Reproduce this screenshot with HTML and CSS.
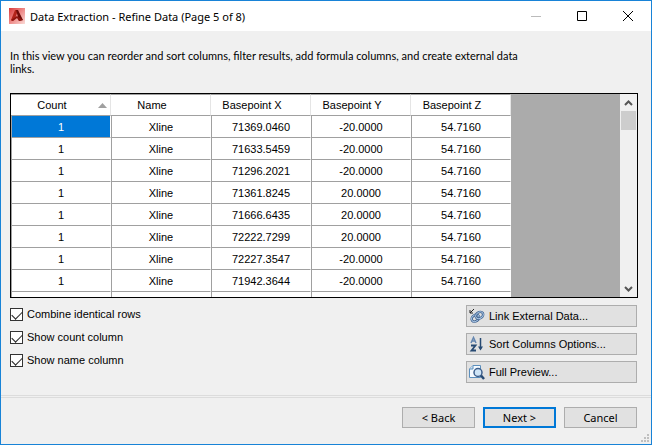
FILE: index.html
```html
<!DOCTYPE html>
<html lang="en">
<head>
  <meta charset="UTF-8">
  <meta name="viewport" content="width=device-width, initial-scale=1.0">
  <title>Data Extraction - Refine Data (Page 5 of 8)</title>
  <link rel="stylesheet" href="styles.css">
</head>
<body>
  <div class="window">
    <header class="title-bar">
      <svg class="app-icon" width="16" height="16" viewBox="0 0 16 16" aria-hidden="true">
        <defs>
          <linearGradient id="appRed" x1="0" y1="0" x2="1" y2="1">
            <stop offset="0" stop-color="#d93a3a"/>
            <stop offset="0.5" stop-color="#ee8a88"/>
            <stop offset="1" stop-color="#fbdcd8"/>
          </linearGradient>
        </defs>
        <rect width="16" height="16" fill="url(#appRed)"/>
        <path d="M6 2h3L7 8l-1 3-3 2-1-1z" fill="#b3231a"/>
        <path d="M7 2h2l5 10-4 1-1-4z" fill="#6e0b08"/>
        <path d="M2 12l6-4 6 4-4 1-2-3-4 3z" fill="#8e140e"/>
      </svg>
      <h1 class="title">Data Extraction - Refine Data (Page 5 of 8)</h1>
      <div class="window-controls">
        <button type="button" aria-label="Minimize" disabled>
          <svg width="10" height="10" viewBox="0 0 10 10"><path d="M0 5.500h10" stroke="#bbb"/></svg>
        </button>
        <button type="button" aria-label="Maximize">
          <svg width="10" height="10" viewBox="0 0 10 10"><path d="M.5.5h9v9h-9z" fill="none" stroke="#000"/></svg>
        </button>
        <button type="button" aria-label="Close">
          <svg width="10" height="10" viewBox="0 0 10 10"><path d="M0 0l10 10M10 0L0 10" stroke="#000"/></svg>
        </button>
      </div>
    </header>

    <main class="content">
      <p class="intro">In this view you can reorder and sort columns, filter results, add formula columns, and create external data links.</p>

      <div class="grid">
        <div class="grid-view">
          <table>
            <thead>
              <tr>
                <th>Count<svg class="sort-mark" width="9" height="5" viewBox="0 0 9 5"><path d="M0 5l4.500-5L9 5z" fill="#a0a0a0"/></svg></th>
                <th>Name</th><th>Basepoint X</th><th>Basepoint Y</th><th>Basepoint Z</th>
              </tr>
            </thead>
            <tbody>
              <tr><td class="selected">1</td><td>Xline</td><td>71369.0460</td><td>-20.0000</td><td>54.7160</td></tr>
              <tr><td>1</td><td>Xline</td><td>71633.5459</td><td>-20.0000</td><td>54.7160</td></tr>
              <tr><td>1</td><td>Xline</td><td>71296.2021</td><td>-20.0000</td><td>54.7160</td></tr>
              <tr><td>1</td><td>Xline</td><td>71361.8245</td><td>20.0000</td><td>54.7160</td></tr>
              <tr><td>1</td><td>Xline</td><td>71666.6435</td><td>20.0000</td><td>54.7160</td></tr>
              <tr><td>1</td><td>Xline</td><td>72222.7299</td><td>20.0000</td><td>54.7160</td></tr>
              <tr><td>1</td><td>Xline</td><td>72227.3547</td><td>-20.0000</td><td>54.7160</td></tr>
              <tr><td>1</td><td>Xline</td><td>71942.3644</td><td>-20.0000</td><td>54.7160</td></tr>
              <tr><td></td><td></td><td></td><td></td><td></td></tr>
            </tbody>
          </table>
        </div>
        <div class="scrollbar">
          <button type="button" aria-label="Scroll up">
            <svg width="9" height="6" viewBox="0 0 9 6"><path d="M1 5l3.500-3.500L8 5" fill="none" stroke="#555" stroke-width="2"/></svg>
          </button>
          <div class="track"><div class="thumb"></div></div>
          <button type="button" aria-label="Scroll down">
            <svg width="9" height="6" viewBox="0 0 9 6"><path d="M1 1l3.500 3.500L8 1" fill="none" stroke="#555" stroke-width="2"/></svg>
          </button>
        </div>
      </div>

      <div class="options">
        <div class="checks">
          <label><input type="checkbox" checked>Combine identical rows</label>
          <label><input type="checkbox" checked>Show count column</label>
          <label><input type="checkbox" checked>Show name column</label>
        </div>
        <div class="tools">
          <button type="button" class="btn tool">
            <svg width="16" height="16" viewBox="0 0 16 16" aria-hidden="true">
              <g fill="none" transform="rotate(-35 8 9)">
                <ellipse cx="6" cy="9" rx="4" ry="3" stroke="#3d5f8c" stroke-width="2.500"/>
                <ellipse cx="6" cy="9" rx="4" ry="3" stroke="#a9c6e4"/>
                <ellipse cx="11" cy="9" rx="4" ry="3" stroke="#3d5f8c" stroke-width="2.500"/>
                <ellipse cx="11" cy="9" rx="4" ry="3" stroke="#a9c6e4"/>
              </g>
              <path d="M5 1L1 5M1 2v3h3" fill="none" stroke="#222"/>
            </svg>
            Link External Data...
          </button>
          <button type="button" class="btn tool">
            <svg width="16" height="16" viewBox="0 0 16 16" aria-hidden="true">
              <path d="M2 7L4.500 1.500 7 7M3 5h3" fill="none" stroke="#6486b0" stroke-width="1.500"/>
              <path d="M2 9.500h4.500l-4 5H7" fill="none" stroke="#274a73" stroke-width="1.800"/>
              <path d="M11.500 2v11" stroke="#274a73" stroke-width="1.500"/>
              <path d="M9 10.500h5L11.500 14.500z" fill="#274a73"/>
            </svg>
            Sort Columns Options...
          </button>
          <button type="button" class="btn tool">
            <svg width="16" height="16" viewBox="0 0 16 16" aria-hidden="true">
              <path d="M4 1.500h7.500v12H.5V5z" fill="#f5faff" stroke="#5c8fbd"/>
              <path d="M.5 5H4V1.500" fill="#cfe2f3" stroke="#5c8fbd"/>
              <circle cx="9" cy="8.500" r="4" fill="#cfe5f7" stroke="#3d5f8c" stroke-width="1.500"/>
              <path d="M12 11.500l3 3.500" stroke="#274a73" stroke-width="2.500"/>
            </svg>
            Full Preview...
          </button>
        </div>
      </div>
    </main>

    <footer class="wizard-nav">
      <button type="button" class="btn">&lt; Back</button>
      <button type="button" class="btn default">Next &gt;</button>
      <button type="button" class="btn">Cancel</button>
      <svg class="grip" width="8" height="8" viewBox="0 0 8 8" aria-hidden="true">
        <path d="M6 0h2v2H6zM3 3h2v2H3zM6 3h2v2H6zM0 6h2v2H0zM3 6h2v2H3zM6 6h2v2H6z" fill="#bfbfbf"/>
      </svg>
    </footer>
  </div>
</body>
</html>
```
FILE: styles.css
```css
* {
  box-sizing: border-box;
}
body {
  margin: 0;
  font-family: "Liberation Sans", Arial, sans-serif;
  font-size: 11px;
  line-height: 13px;
  color: #000;
}
button {
  font: inherit;
  color: inherit;
  padding: 0;
}
.window {
  display: flex;
  flex-direction: column;
  height: 100vh;
  background-color: #f0f0f0;
  border: 1px solid #1883d7;
}

/* title bar */
.title-bar {
  display: flex;
  align-items: center;
  height: 30px;
  padding-left: 8px;
  background-color: #fff;
}
.title {
  flex: 1;
  margin: 0 0 0 5px;
  font-family: "Noto Sans", sans-serif;
  font-size: 11px;
  font-weight: normal;
}
.window-controls {
  display: flex;
}
.window-controls button {
  display: flex;
  align-items: center;
  justify-content: center;
  width: 46px;
  height: 28px;
  border: none;
  background: none;
}

/* page content */
.content {
  display: flex;
  flex-direction: column;
  flex: 1;
  min-height: 0;
  padding: 18px 13px 12px 9px;
}
.intro {
  max-width: 510px;
  margin: 0 0 18px;
  font-family: Lato, sans-serif;
}
.grid {
  display: flex;
  flex: 1;
  min-height: 0;
  border: 1px solid #000;
  background-color: #ababab;
}
.grid-view {
  flex: 1;
  overflow: hidden;
}
table {
  width: 500px;
  table-layout: fixed;
  border-collapse: separate;
  border-spacing: 0;
  background-color: #fff;
}
th, td {
  height: 22px;
  padding: 1px 0 0;
  text-align: center;
  font-weight: normal;
  border-bottom: 1px solid #a0a0a0;
}
th {
  position: relative;
  padding: 0 17px 0 0;
  border-top: 1px solid #a0a0a0;
  border-right: 1px solid #e5e5e5;
}
td {
  border-left: 1px solid #a0a0a0;
  border-right: 1px solid #fff;
}
td.selected {
  background-color: #0078d7;
  background-clip: padding-box;
  color: #fff;
}
.sort-mark {
  position: absolute;
  right: 3px;
  top: 8px;
}

.scrollbar {
  display: flex;
  flex-direction: column;
  width: 17px;
  background-color: #f0f0f0;
}
.scrollbar button {
  display: flex;
  align-items: center;
  justify-content: center;
  height: 17px;
  border: none;
  background: none;
}
.track {
  flex: 1;
}
.thumb {
  height: 19px;
  margin: 0 1px;
  background-color: #cdcdcd;
}

.options {
  display: flex;
  justify-content: space-between;
  padding: 7px 1px 0 0;
}
.checks {
  display: flex;
  flex-direction: column;
  gap: 10px;
  padding-top: 3px;
}
.checks label {
  display: flex;
  align-items: center;
  gap: 4px;
}
.checks input {
  appearance: none;
  width: 13px;
  height: 13px;
  margin: 0;
  border: 1px solid #333;
  background-color: #fff;
}
.checks input:checked::before {
  content: "";
  display: block;
  width: 9px;
  height: 5px;
  margin: 2px 1px;
  border-left: 1px solid #222;
  border-bottom: 1px solid #222;
  transform: rotate(-45deg);
}
.tools {
  display: flex;
  flex-direction: column;
  gap: 6px;
  width: 171px;
}
.btn {
  height: 22px;
  border: 1px solid #adadad;
  background-color: #e1e1e1;
}
.tool {
  display: flex;
  align-items: center;
  gap: 4px;
  padding-left: 2px;
}

/* wizard buttons */
.wizard-nav {
  position: relative;
  display: flex;
  justify-content: flex-end;
  gap: 8px;
  padding: 9px 14px 16px;
  border-top: 3px double #dcdcdc;
}
.wizard-nav .btn {
  width: 73px;
  height: 21px;
  font-family: "Noto Sans", sans-serif;
}
.wizard-nav .default {
  border: 2px solid #0078d7;
}
.grip {
  position: absolute;
  right: 2px;
  bottom: 2px;
}
```
